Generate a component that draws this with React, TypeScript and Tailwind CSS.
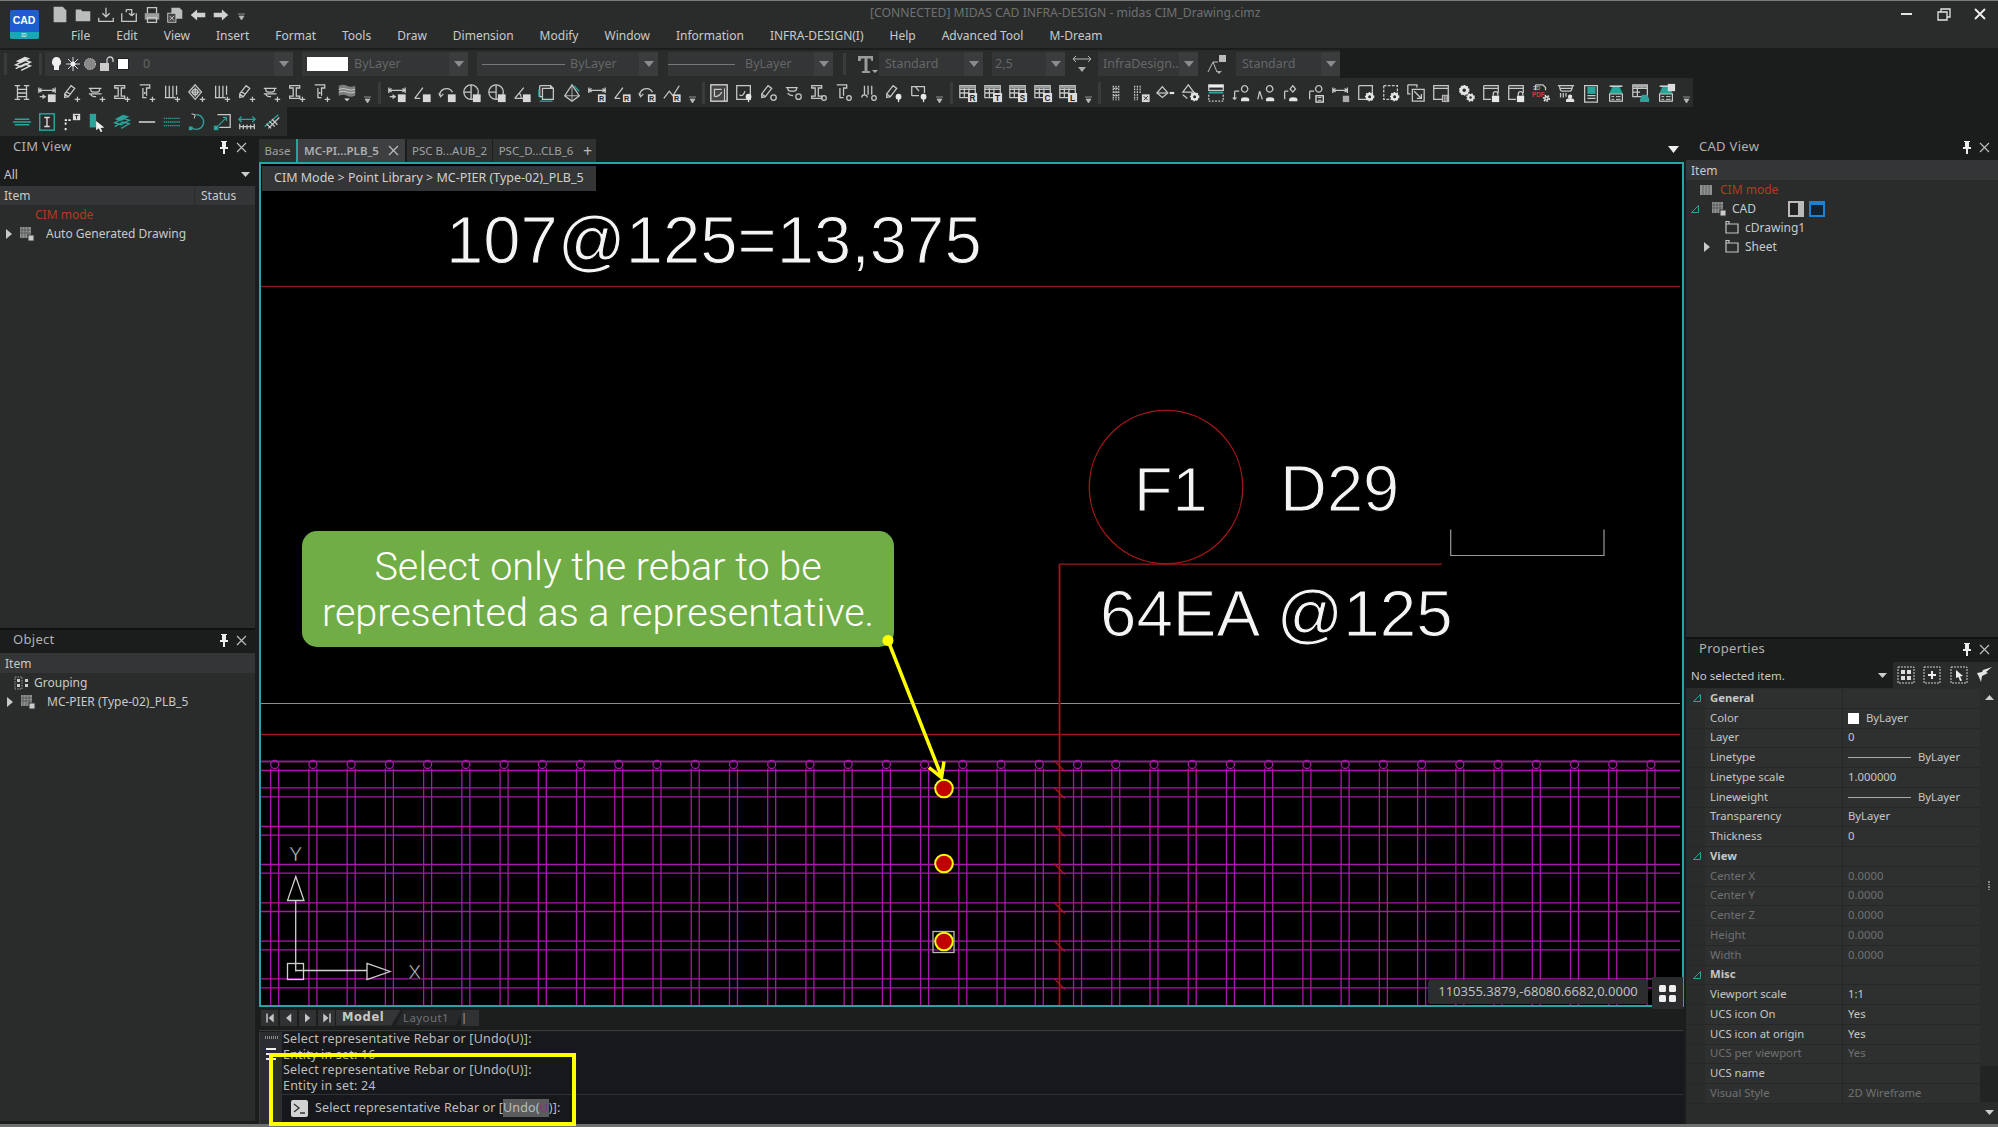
import React from "react";

const S = { stroke: "#c6c8c8", strokeWidth: 1.4, fill: "none" } as const;
const T = "#2aa39a";
const badge = (l?: string) => (
  <g>
    <rect x="12" y="12.5" width="8.5" height="8.5" fill="#d8d8d8" />
    {l ? <text x="16.2" y="20" fontSize="8" fontWeight="700" textAnchor="middle" fill="#222" fontFamily="Liberation Sans, sans-serif">{l}</text> : null}
  </g>
);
const plus = <path d="M17 15v6M14 18h6" {...S} />;
const lens = <g><circle cx="16" cy="15" r="3.2" fill="#e8e8e8" /><path d="M16 17v4" stroke="#e8e8e8" strokeWidth="1.4" /></g>;
const person = <g><path d="M15 3a3.5 3.5 0 1 0 .01 0M4 9h5M4 9v9" {...S} /><path d="M11 20h9v-2a4 2 0 0 0-9 0z" fill="#e4e4e4" /><path d="M4 18l-2-2M4 18l2-2" {...S} /></g>;
const gear = (x: number, y: number, r = 3) => (
  <g>
    <circle cx={x} cy={y} r={r} fill="none" stroke="#e4e4e4" strokeWidth={r * 0.9} />
    <circle cx={x} cy={y} r={r + 1.4} fill="none" stroke="#e4e4e4" strokeWidth="1.6" strokeDasharray="1.6 1.6" />
  </g>
);
const win = <path d="M3 3h16v15H3zM3 6h16" {...S} />;
const lock = <g><rect x="12" y="14" width="8" height="7" fill="#e8e8e8" /><path d="M13.5 14v-2a2.5 2.5 0 0 1 5 0v2" {...S} /></g>;
const table = (l: string) => (
  <g>
    <path d="M2 3h17v13H2zM2 7h17M2 11h10M7 3v13M12 3v13" {...S} />
    <rect x="2" y="3" width="17" height="3" fill="#9a9c9c" />
    <rect x="11" y="11" width="10" height="10" fill="#dcdcdc" />
    <text x="16" y="19.5" fontSize="9" fontWeight="700" textAnchor="middle" fill="#222" fontFamily="Liberation Sans, sans-serif">{l}</text>
  </g>
);
const dome = <g><path d="M4 11l3-7h8l3 7z" fill={T} /><path d="M4 3.5h14" stroke="#ddd" strokeWidth="1.6" /><rect x="4" y="12" width="14" height="8" fill="none" stroke="#ddd" strokeWidth="1.2" /><path d="M6 15h3M6 18h3M11 15h5M11 18h5" stroke="#ddd" /></g>;

const ICONS: Record<string, React.ReactNode> = {
  page: <path d="M4 2h10l4 4v13H4z" fill="#bbbdbd" />,
  folder: <path d="M3 5h6l1 2h9v11H3z" fill="#bbbdbd" />,
  dl: <path d="M3 14v4h16v-4M11 3v10M7 9l4 4 4-4" {...S} />,
  ul: <path d="M3 9v9h16V9M8 5h6v7M14 12l-3-3M14 12l3-3M8 5v3" {...S} />,
  print: <g><path d="M3 9h16v7H3z" fill="#9b9d9d" /><path d="M6 9V3h10v6M6 14h10v5H6z" {...S} /></g>,
  saveall: <g><path d="M7 3h9l3 3v9H7z" fill="#bbbdbd" /><rect x="3" y="9" width="9" height="10" fill="#444" stroke="#ccc" /><path d="M5 12l5 5M10 12l-5 5" stroke="#ddd" /></g>,
  back: <path d="M3 11l7-6v3.5h9v5h-9V17z" fill="#d0d2d2" />,
  fwd: <path d="M19 11l-7-6v3.5H3v5h9V17z" fill="#d0d2d2" />,
  gridh: <path d="M3 3h6M6 3v15M3 18h6M13 3h6M16 3v15M13 18h6M6 7h10M6 11h10M6 15h10" {...S} />,
  dimi: <g><path d="M2 8h18M2 5v6M20 5v6M5 6l-3 2 3 2M17 6l3 2-3 2" {...S} />{badge()}<path d="M3 15h6M6 13l3 2-3 2" {...S} /></g>,
  pencil: <g><path d="M3 12l7-9 4 3-7 9zM5 9.500l4 3M3 12l0 4 4-1" {...S} />{plus}</g>,
  bowl: <g><path d="M2 6h14M4 6q0 4 3 4h4q3 0 3-4M2 12h14M4 12q1 3 4 3h2" {...S} />{plus}</g>,
  ibeam: <g><path d="M3 3h11v2.500h-3.800v9H14V17H3v-2.500h3.800v-9H3z" {...S} />{plus}</g>,
  tbeam: <g><path d="M3 2h11v3.500h-3.500V14M6.500 5.500V16h4" {...S} /><circle cx="8.500" cy="11" r="1" fill="#ccc" />{plus}</g>,
  comb: <g><path d="M4 3v13M8 3v13M12 3v13M16 3v10M3 16h12" {...S} />{plus}</g>,
  target: <g><path d="M9 2l7 8-7 8-7-8z" {...S} /><circle cx="9" cy="10" r="3" {...S} /><path d="M9 5v10M4 10h10" {...S} />{plus}</g>,
  wave: <g><path d="M2 3q5-2 9 0t9 0v11q-5 2-9 0t-9 0z" fill="#7c7e7e" /><path d="M2 7q5-2 9 0t9 0M2 10q5-2 9 0t9 0" stroke="#d0d0d0" fill="none" /><path d="M8 17h6l-3 3z" fill="#ddd" /></g>,
  anglei: <g><path d="M3 17L12 5M3 17h6" {...S} />{badge()}</g>,
  arci: <g><path d="M3 14a7.500 7.500 0 0 1 14-4" {...S} /><path d="M2 11l2 4 3-3" {...S} />{badge()}</g>,
  circi: <g><circle cx="10" cy="10" r="8" {...S} /><path d="M10 2v16M2 10h8" {...S} />{badge()}</g>,
  tri: <g><path d="M3 17L13 5M3 17h13M10 17a7 7 0 0 0-2-6" {...S} />{badge()}</g>,
  cube: <g><path d="M6 6h12v12H6zM3 3h12v3M3 3v12h3M15 3l3 3" {...S} /><path d="M3 20h14" stroke={T} strokeWidth="1.4" /><path d="M2 7v8" stroke={T} strokeWidth="1.4" /></g>,
  dia: <g><path d="M11 2L3 14l8 6 8-6z" {...S} /><path d="M11 2v18M3 14h16" {...S} strokeWidth={0.9} /><path d="M13 3l6 6" stroke={T} strokeWidth="1.4" /></g>,
  dimr: <g><path d="M2 8h18M2 5v6M20 5v6" {...S} /><path d="M5 6l-3 2 3 2M17 6l3 2-3 2" {...S} />{badge("R")}</g>,
  angler: <g><path d="M3 17L12 5M3 17h6" {...S} />{badge("R")}</g>,
  arcr: <g><path d="M3 14a7.500 7.500 0 0 1 14-4" {...S} /><path d="M2 11l2 4 3-3" {...S} />{badge("R")}</g>,
  polyr: <g><path d="M2 17l6-8 4 5 7-11" {...S} />{badge("R")}</g>,
  fr1: <g><rect x="2" y="2" width="18" height="18" fill="#444" stroke="#ddd" strokeWidth="1.4" /><path d="M6 15V7h8M6 15q6 0 8-5" {...S} /><path d="M17 6v14" stroke="#ddd" /></g>,
  fr2: <g><path d="M3 3h15v15H3z" {...S} /><path d="M6 13q4 3 6-4" {...S} />{lens}</g>,
  pencilo: <g><path d="M3 12l7-9 4 3-7 9zM3 12l0 4 4-1" {...S} /><circle cx="16" cy="16" r="3" {...S} /></g>,
  bowlo: <g><path d="M2 5h13M4 5q0 4 3 4h4q3 0 3-4M4 11q2 3 6 3" {...S} /><circle cx="16" cy="15" r="3" {...S} /></g>,
  ibeamo: <g><path d="M3 3h11v2.500h-3.800v9H14V17H3v-2.500h3.800v-9H3z" {...S} /><circle cx="16.500" cy="16.500" r="2.500" {...S} /></g>,
  tbeamo: <g><path d="M3 2h11v3.500h-3.500V14M6.500 5.500V16h4" {...S} /><circle cx="16.500" cy="16.500" r="2.500" {...S} /></g>,
  combo: <g><path d="M6 3v10M10 3v10M14 3v10" {...S} /><path d="M3 16a3 3 0 0 1 6 0" {...S} /><circle cx="16.500" cy="16.500" r="2.500" {...S} /></g>,
  penlens: <g><path d="M3 12l7-9 4 3-7 9zM3 12l0 4 4-1" {...S} />{lens}</g>,
  gauge: <g><path d="M3 14V4h14v7M3 14h8" {...S} /><path d="M7 4l4 5" {...S} />{lens}</g>,
  tR: table("R"), tT: table("T"), tS: table("S"), tC: table("C"), tL: table("L"),
  dots: <path d="M8 3v16M11 3v16M14 3v16M8 6h6M8 10h6M8 14h6" {...S} strokeDasharray="2 1" />,
  dotsx: <g><path d="M4 3v16M7 3v16M10 3v9" {...S} strokeDasharray="2 1" /><rect x="12" y="12.500" width="8.500" height="8.500" fill="#d8d8d8" /><path d="M14 14.500l4.500 4.500M18.500 14.500L14 19" stroke="#222" /></g>,
  eye: <g><path d="M1 11l6-7 6 7-6 5z" {...S} /><path d="M1 11h12" {...S} /><path d="M15 11h5" stroke="#e4e4e4" strokeWidth="2.400" /></g>,
  diagear: <g><path d="M8 2L2 10h12z" {...S} /><path d="M2 13l5 4" {...S} />{gear(15, 15)}</g>,
  winteal: <g><path d="M3 2h16v6H3z" {...S} /><rect x="3" y="2" width="16" height="3" fill="#eee" /><path d="M3 10.500h16" stroke={T} strokeWidth="2.200" /><path d="M3 13v7h16v-7" {...S} strokeDasharray="2 1.500" /></g>,
  per1: person,
  per2: <g><path d="M15 3a3.500 3.500 0 1 0 .01 0M4 9l-2 9M4 9l3 9" {...S} /><path d="M11 20h9v-2a4 2 0 0 0-9 0z" fill="#e4e4e4" /></g>,
  per3: <g><path d="M13 3l3 3.500-3 3.500-3-3.500zM4 9h4M4 9v9" {...S} /><path d="M9 20h9v-2a4 2 0 0 0-9 0z" fill="#e4e4e4" /></g>,
  per4: <g><path d="M14 3a3.500 3.500 0 1 0 .01 0M4 9h5M4 9v9" {...S} /><rect x="11" y="14" width="8" height="7" fill="none" stroke="#e4e4e4" strokeWidth="1.400" /><path d="M13 16h4M13 19h4" stroke="#e4e4e4" /></g>,
  diml: <g><path d="M2 8h16M2 5v6M18 5v6M5 6l-3 2 3 2M15 6l3 2-3 2" {...S} /><rect x="13" y="14" width="7" height="7" fill="#aaa" /></g>,
  frgear: <g><path d="M3 3h15v8M3 3v15h8" {...S} />{gear(15, 15)}</g>,
  frgear2: <g><path d="M3 3h15v8M3 3v15h8" {...S} strokeDasharray="3 1.500" />{gear(15, 15)}</g>,
  frarrow: <g><path d="M7 7h13v13H7zM2 2h10v3M2 2v10h3" {...S} /><path d="M9 9l8 8M17 12v5h-5" {...S} /></g>,
  wingrid: <g>{win}<rect x="12" y="13" width="8" height="8" fill="#bbb" /><path d="M14 14v6M16.500 14v6" stroke="#333" /></g>,
  gears: <g>{gear(9, 8, 3.600)}{gear(16, 16, 2.600)}</g>,
  winlock: <g><path d="M3 3h16v8M3 3v15h8M3 6h16" {...S} />{lock}</g>,
  pdf: <g><path d="M5 2h8l3 3v3M5 8V2" {...S} /><text x="2" y="8" fontSize="6.500" fill="#ccc" fontFamily="Liberation Sans, sans-serif">3D</text><text x="1" y="15.500" fontSize="7" fontWeight="700" fill="#d04040" fontFamily="Liberation Sans, sans-serif">PDF</text>{gear(17, 17, 1.800)}</g>,
  bowlp: <g><path d="M2 3h18M4 3q0 6 3 6h8q3 0 3-6M5 6h12" {...S} /><path d="M5 11v5M8 11v5M11 11v4" {...S} /><path d="M11 21h9v-2a4 2 0 0 0-9 0z" fill="#e4e4e4" /><circle cx="15.500" cy="15" r="2.400" fill="#e4e4e4" /></g>,
  book3d: <g><path d="M4 3h14v18H4z" {...S} /><rect x="7" y="4" width="9" height="8" fill={T} /><path d="M7 14h9M7 17h9" {...S} /></g>,
  dome,
  tdome: <g><path d="M2 2h16v13H2zM2 6h16M2 10h8M7 2v13M12 2v4" {...S} /><rect x="2" y="2" width="16" height="3" fill="#aaa" /><path d="M10 21v-3l2-5h6l2 5v3z" fill={T} /></g>,
  domel: <g>{dome}<rect x="13" y="1" width="8" height="8" fill="#ddd" /></g>,
  eq: <path d="M3 8h16M3 14h16M1 11h20" stroke={T} strokeWidth="1.500" fill="none" />,
  ibox: <g><rect x="3" y="2" width="16" height="18" fill="none" stroke={T} strokeWidth="1.600" /><path d="M8 6h6M11 6v10M8 16h6" stroke="#ddd" strokeWidth="1.500" /></g>,
  flag: <g><path d="M4 20v-3M4 14V9h6" stroke="#eee" strokeWidth="2" fill="none" strokeDasharray="2.500 1.500" /><rect x="12" y="2" width="8" height="7" fill="#ddd" /><path d="M14 4h4M16 4v4" stroke="#222" /></g>,
  cursor: <g><path d="M3 2h7v15H3z" fill={T} /><path d="M10 10l9 7-4 .500 2 4-2 .500-2-4-3 2z" fill="#f0f0f0" /></g>,
  layt: <g><path d="M3 8l9-5 7 2-9 5z" fill={T} /><path d="M3 12l9-5 7 2-9 5zM3 16l9-5 7 2-9 5" fill="none" stroke={T} strokeWidth="1.500" /></g>,
  line: <path d="M2 11h18" stroke="#ddd" strokeWidth="1.600" />,
  dashes: <path d="M2 7h18M2 11h18M2 15h18" stroke={T} strokeWidth="1.400" strokeDasharray="1.500 .8" />,
  rot: <g><path d="M10 3a8 8 0 1 1-5 14" {...S} stroke={T} /><path d="M5 2l4 1-1 4" stroke="#ddd" fill="none" /><rect x="2" y="16" width="4" height="4" fill={T} /></g>,
  scale: <g><rect x="2" y="15" width="5" height="5" fill={T} /><path d="M6 3h14v14H8" {...S} /><path d="M7 15L16 6M16 6h-4M16 6v4" stroke={T} strokeWidth="1.300" fill="none" /></g>,
  dims: <g><path d="M2 8h18M5 5l-3 3 3 3M17 5l3 3-3 3" stroke={T} strokeWidth="1.400" fill="none" /><path d="M3 13v6M7 14v5M11 14v5M15 14v5M19 13v6M3 16h16" {...S} /></g>,
  diag: <g><path d="M3 16L18 3" stroke={T} strokeWidth="1.500" /><path d="M7 18l12-12M8 10l6 6M11 8l6 6M5 13l5 5" {...S} /></g>,
};

const Ico = ({ n, s = 20 }: { n: string; s?: number }) => (
  <svg viewBox="0 0 22 22" width={s} height={s} className="shrink-0">{ICONS[n]}</svg>
);
const Drop = () => (
  <div className="w-[15px] h-full flex items-end justify-center pb-[3px] shrink-0">
    <svg width="7" height="8" viewBox="0 0 7 8"><path d="M0 1h7M1 3h5l-2.500 4z" stroke="#b8b8b8" fill="#b8b8b8" strokeWidth=".7" /></svg>
  </div>
);
const Sep = ({ w }: { w: number }) => (
  <div className="h-full flex items-center justify-center shrink-0" style={{ width: w }}>
    <div className="w-[3px] h-[22px] bg-[#3a3c3c]" />
  </div>
);
const Row = ({ items }: { items: (string | number)[] }) => (
  <>
    {items.map((n, i) =>
      typeof n === "number" ? <Sep key={i} w={n} /> : n === "drop" ? <Drop key={i} /> : (
        <div key={i} className="w-[25px] h-full flex items-center justify-center shrink-0"><Ico n={n} /></div>
      )
    )}
  </>
);

const Arrow = ({ cls = "" }: { cls?: string }) => (
  <svg width="10" height="6" viewBox="0 0 10 6" className={cls}><path d="M0 0h10L5 6z" fill="#8a8c8c" /></svg>
);
const Combo = ({ w, children, ml = 0 }: { w: number; children?: React.ReactNode; ml?: number }) => (
  <div className="h-[24px] bg-[#333536] flex items-center relative shrink-0 text-[#656767] text-[12.500px]" style={{ width: w, marginLeft: ml }}>
    {children}
    <div className="absolute right-0 top-0 bottom-0 w-[19px] flex items-center justify-center bg-[#3a3c3d]"><Arrow /></div>
  </div>
);
const Pin = () => (
  <svg width="10" height="13" viewBox="0 0 10 13"><path d="M2 0h6v1H7v5h2v2H6v5H4V8H1V6h2V1H2z" fill="#ededed" /></svg>
);
const Close = () => (
  <svg width="11" height="11" viewBox="0 0 11 11"><path d="M1 1l9 9M10 1l-9 9" stroke="#bcbcbc" strokeWidth="1.200" /></svg>
);
const PanelTitle = ({ t, h = 26 }: { t: string; h?: number }) => (
  <div className="flex items-center pl-[13px] pr-[8px] bg-[#1b1c1c] text-[#b0b2b2] text-[13px] tracking-[.3px] shrink-0" style={{ height: h, paddingBottom: h > 24 ? 6 : 3 }}>
    <span className="flex-1">{t}</span>
    <div className="flex items-center gap-[7px]"><Pin /><Close /></div>
  </div>
);
const TriR = () => <svg width="6" height="10" viewBox="0 0 6 10"><path d="M0 0l6 5-6 5z" fill="#c8c8c8" /></svg>;
const TriE = () => <svg width="8" height="8" viewBox="0 0 8 8"><path d="M7.500.500v7H.5z" fill="none" stroke={T} /></svg>;
const TreeIcon = () => (
  <svg width="16" height="16" viewBox="0 0 16 16"><rect x="1" y="1" width="11" height="11" fill="#8f9191" /><path d="M3 1v11M6 1v11M9 1v11M1 4h11M1 7h11" stroke="#4a4c4c" strokeWidth=".7" /><rect x="9" y="9" width="6" height="6" fill="#ccc" stroke="#333" /></svg>
);
const Folder = () => (
  <svg width="14" height="13" viewBox="0 0 14 13"><path d="M1 3h12v9H1zM1 3V0M4 3V0M1 .500h3" fill="none" stroke="#c4c4c4" strokeWidth="1.200" /></svg>
);

const Grid = () => {
  const ys = [771, 788.3, 797.3, 827, 835.7, 865, 873.7, 903.3, 912, 941.7, 950.3, 979.3, 988.3];
  const cols = Array.from({ length: 37 }, (_, i) => 274.7 + i * 38.23);
  const ticks = [766, 793, 831, 869, 908, 946, 984];
  return (
    <svg className="absolute left-0 top-0" width="1419" height="841" viewBox="261 164.500 1419 841">
      <path d="M261 287h1419" stroke="#8f1616" strokeWidth="1.300" />
      <path d="M261 704h1419" stroke="#8c8c8c" strokeWidth="1.200" />
      <path d="M261 735h1419" stroke="#a01818" strokeWidth="1.500" />
      <path d="M261 762h1419" stroke="#7a2a7a" strokeWidth="2" />
      {ys.map((y) => <path key={y} d={`M261 ${y}h1419`} stroke="#a818a8" strokeWidth="1.300" />)}
      {cols.map((x) => (
        <g key={x} stroke="#a818a8" strokeWidth="1.300" fill="none">
          <path d={`M${x - 4} 1006V769M${x + 4} 1006V769`} />
          <circle cx={x} cy="765" r="4" />
        </g>
      ))}
      <path d="M1059.500 565V1006" stroke="#701010" strokeWidth="1.800" />
      {ticks.map((y) => <path key={y} d={`M1054 ${y - 5}l11 11`} stroke="#a81818" strokeWidth="1.300" />)}
      <path d="M1442 564.700H1059.500V1006" stroke="#a01818" strokeWidth="1.300" fill="none" />
      <circle cx="1166" cy="487.500" r="76.700" stroke="#a01818" strokeWidth="1.300" fill="none" />
      <path d="M1450.700 530v26H1604v-26" stroke="#9a9a9a" strokeWidth="1.200" fill="none" />
      <g fontFamily="Liberation Sans, sans-serif" fill="#f4f4f4" stroke="#000" strokeWidth="1.100" paintOrder="fill">
        <text x="446" y="263" fontSize="67">107@125=13,375</text>
        <text x="1134" y="511" fontSize="63">F1</text>
        <text x="1280" y="511" fontSize="65">D29</text>
        <text x="1100" y="636" fontSize="65.500" wordSpacing="2">64EA @125</text>
      </g>
      <g stroke="#d0d0d0" strokeWidth="1.300" fill="none">
        <rect x="287.500" y="964" width="16" height="16" />
        <path d="M295.700 972V901M295.700 971H367M287.500 901h16.500l-8.200-24zM367 964v16l23-8z" />
      </g>
      <g fontFamily="Liberation Sans, sans-serif" fill="#d8d8d8" fontSize="20" stroke="#000" strokeWidth=".6">
        <text x="289" y="861">Y</text>
        <text x="408" y="979">X</text>
      </g>
      {[789, 864, 942].map((y) => <circle key={y} cx="944" cy={y} r="8.800" fill="#c00000" stroke="#ffff00" strokeWidth="2" />)}
      <rect x="933" y="932" width="21" height="21" fill="none" stroke="#b8b8b8" strokeWidth="1.300" />
    </svg>
  );
};

const props: { t: string; l?: string; v?: React.ReactNode; d?: boolean; s?: boolean }[] = [
  { t: "s", l: "General", s: true },
  { t: "r", l: "Color", v: <span className="flex items-center gap-[7px]"><span className="w-[11px] h-[11px] bg-white" />ByLayer</span> },
  { t: "r", l: "Layer", v: "0" },
  { t: "r", l: "Linetype", v: <span className="flex items-center gap-[7px]"><span className="w-[63px] h-px bg-[#aaa]" />ByLayer</span> },
  { t: "r", l: "Linetype scale", v: "1.000000" },
  { t: "r", l: "Lineweight", v: <span className="flex items-center gap-[7px]"><span className="w-[63px] h-px bg-[#aaa]" />ByLayer</span> },
  { t: "r", l: "Transparency", v: "ByLayer" },
  { t: "r", l: "Thickness", v: "0" },
  { t: "s", l: "View", s: true },
  { t: "r", l: "Center X", v: "0.0000", d: true },
  { t: "r", l: "Center Y", v: "0.0000", d: true },
  { t: "r", l: "Center Z", v: "0.0000", d: true },
  { t: "r", l: "Height", v: "0.0000", d: true },
  { t: "r", l: "Width", v: "0.0000", d: true },
  { t: "s", l: "Misc", s: true },
  { t: "r", l: "Viewport scale", v: "1:1" },
  { t: "r", l: "UCS icon On", v: "Yes" },
  { t: "r", l: "UCS icon at origin", v: "Yes" },
  { t: "r", l: "UCS per viewport", v: "Yes", d: true },
  { t: "r", l: "UCS name", v: "" },
  { t: "r", l: "Visual Style", v: "2D Wireframe", d: true },
];

const row2 = [
  "gridh", "dimi", "pencil", "bowl", "ibeam", "tbeam", "comb", "target", "comb", "pencil", "bowl", "ibeam", "tbeam", "wave", "drop", 10,
  "dimi", "anglei", "arci", "circi", "circi", "tri", "cube", "dia", "dimr", "angler", "arcr", "polyr", "drop", 7,
  "fr1", "fr2", "pencilo", "bowlo", "ibeamo", "tbeamo", "combo", "penlens", "gauge", "drop", 9,
  "tR", "tT", "tS", "tC", "tL", "drop", 8,
  "dots", "dotsx", "eye", "diagear", "winteal", "per1", "per2", "per3", "per4", "diml", "frgear", "frgear2", "frarrow", "wingrid", "gears", "winlock", "winlock", "pdf", "bowlp", "book3d", "dome", "tdome", "domel", "drop",
];
const row3 = ["eq", "ibox", "flag", "cursor", "layt", "line", "dashes", "rot", "scale", "dims", "diag"];
const menus = ["File", "Edit", "View", "Insert", "Format", "Tools", "Draw", "Dimension", "Modify", "Window", "Information", "INFRA-DESIGN(I)", "Help", "Advanced Tool", "M-Dream"];

export default function App() {
  return (
    <div className="w-[1998px] h-[1127px] bg-[#1b1c1c] flex flex-col overflow-hidden font-['Noto_Sans',sans-serif] text-[12px] text-[#c8caca] relative border-t border-[#7a7a7a]">
      {/* title + menu */}
      <div className="h-[47px] bg-[#2a2c2c] flex shrink-0">
        <div className="w-[48px] flex justify-center pt-[9px]">
          <div className="w-[29px] h-[29px] rounded-[2px] bg-[#1d5fd0] flex flex-col overflow-hidden">
            <div className="flex-1 flex items-center justify-center text-white font-bold text-[10.500px] font-['Liberation_Sans',sans-serif]">CAD</div>
            <div className="h-[7px] bg-[#19a7b5] text-white text-[5px] leading-[7px] text-center">ID</div>
          </div>
        </div>
        <div className="flex-1 flex flex-col">
          <div className="h-[23px] flex items-center relative">
            <div className="flex items-center gap-[3px] pl-[2px] pt-[5px] h-full">
              {["page", "folder", "dl", "ul", "print", "saveall", "back", "fwd"].map((n) => <Ico key={n} n={n} />)}
              <Drop />
            </div>
            <div className="absolute left-[822px] top-[3px] text-[#6f7171] text-[12.200px] whitespace-nowrap">[CONNECTED] MIDAS CAD INFRA-DESIGN - midas CIM_Drawing.cimz</div>
            <div className="absolute right-0 top-0 h-[26px] flex items-center">
              <div className="w-[39px] flex justify-center"><div className="w-[11px] h-[2px] bg-[#e4e4e4]" /></div>
              <div className="w-[36px] flex justify-center"><svg width="14" height="13" viewBox="0 0 14 13" fill="none" stroke="#e4e4e4" strokeWidth="1.300"><path d="M1 4h9v8H1zM4 4V1h9v8h-3" /></svg></div>
              <div className="w-[36px] flex justify-center"><svg width="12" height="12" viewBox="0 0 12 12"><path d="M1 1l10 10M11 1L1 11" stroke="#f0f0f0" strokeWidth="1.800" /></svg></div>
            </div>
          </div>
          <div className="h-[24px] flex items-center gap-[26px] pl-[23px] text-[12px] text-[#c8caca] whitespace-nowrap">
            {menus.map((m) => <span key={m}>{m}</span>)}
          </div>
        </div>
      </div>

      {/* toolbars */}
      <div className="h-[89px] flex flex-col shrink-0 pt-[2px]">
        <div className="h-[28px] w-[1340px] bg-[#2a2c2c] flex items-center">
          <div className="w-[10px] flex justify-center shrink-0"><div className="w-[3px] h-[22px] bg-[#3a3c3c]" /></div>
          <div className="w-[25px] flex justify-center shrink-0"><svg width="20" height="20" viewBox="0 0 22 22"><path d="M3 8l10-5 6 2-10 5z" fill="#ddd" /><path d="M3 12l10-5 6 2-10 5zM3 16l10-5 6 2-10 5" fill="none" stroke="#ddd" strokeWidth="1.600" /></svg></div>
          <Sep w={10} />
          <Combo w={248}>
            <div className="flex items-center gap-[3px] pl-[5px] w-[98px]">
              <svg width="13" height="17" viewBox="0 0 13 17"><path d="M6.500 1a5 5 0 0 1 2.500 9v4H4v-4a5 5 0 0 1 2.500-9z" fill="#f0f0f0" /></svg>
              <svg width="14" height="14" viewBox="0 0 14 14"><path d="M7 0v14M0 7h14M2 2l10 10M12 2L2 12" stroke="#d8d8d8" /><circle cx="7" cy="7" r="2.500" fill="#eee" /></svg>
              <svg width="14" height="14" viewBox="0 0 14 14"><circle cx="7" cy="7" r="5.500" fill="#888" stroke="#ccc" strokeDasharray="1.500 1" /></svg>
              <svg width="14" height="16" viewBox="0 0 14 16"><rect x="0" y="7" width="9" height="8" fill="#ccc" /><path d="M7 7V4a3 3 0 0 1 6 0v2" fill="none" stroke="#ccc" strokeWidth="1.300" /></svg>
              <span className="w-[12px] h-[12px] bg-white border border-[#222]" />
            </div>
            <span>0</span>
          </Combo>
          <Combo w={166} ml={9}>
            <span className="w-[41px] h-[14px] bg-white ml-[5px] mr-[6px]" />ByLayer
          </Combo>
          <Combo w={181} ml={9}>
            <span className="w-[83px] h-px bg-[#777] ml-[5px] mr-[5px]" />ByLayer
          </Combo>
          <Combo w={165} ml={10}>
            <span className="w-[67px] h-px bg-[#777] ml-0 mr-[10px]" />ByLayer
          </Combo>
          <Sep w={23} />
          <div className="w-[22px] flex justify-center shrink-0">
            <svg width="21" height="21" viewBox="0 0 21 21"><path d="M1 2h15v5h-1.500l-1-2.500H10.500V17H13v2H5v-2h2.500V4.500H4.500L3.500 7H1z" fill="#9a9c9c" /><path d="M15 16h6l-3 3z" fill="#aaa" /></svg>
          </div>
          <Combo w={104} ml={1}><span className="pl-[6px]">Standard</span></Combo>
          <Combo w={73} ml={9}><span className="pl-[3px]">2,5</span></Combo>
          <div className="w-[33px] flex justify-center shrink-0">
            <svg width="18" height="20" viewBox="0 0 18 20"><path d="M0 5h18M3 2L0 5l3 3M15 2l3 3-3 3" stroke="#b8b8b8" fill="none" /><path d="M5 13h8l-4 5z" fill="#aaa" /></svg>
          </div>
          <Combo w={100}><span className="pl-[5px]">InfraDesign...</span></Combo>
          <div className="w-[38px] flex justify-center shrink-0">
            <svg width="20" height="21" viewBox="0 0 20 21"><path d="M1 18l5-10h5M6 8l4 10" stroke="#bbb" fill="none" /><rect x="12" y="1" width="7" height="7" fill="#bbb" /><path d="M9 17h6l-3 3z" fill="#aaa" /></svg>
          </div>
          <Combo w={104}><span className="pl-[6px]">Standard</span></Combo>
        </div>
        <div className="h-[29px] w-[1693px] bg-[#2a2c2c] flex items-center pl-[9.500px] shrink-0"><Row items={row2} /></div>
        <div className="h-[29px] w-[287px] bg-[#2a2c2c] flex items-center pl-[9.500px] shrink-0"><Row items={row3} /></div>
      </div>

      {/* main */}
      <div className="h-[987px] flex shrink-0">
        {/* left */}
        <div className="w-[255px] mr-[4px] flex flex-col shrink-0 text-[12px]">
          <div className="h-[491px] bg-[#2a2c2c] flex flex-col">
            <PanelTitle t="CIM View" />
            <div className="h-[23px] bg-[#1b1c1c] flex items-center justify-between pl-[4px] pr-[5px]"><span>All</span><svg width="9" height="5" viewBox="0 0 9 5"><path d="M0 0h9L4.500 5z" fill="#ccc" /></svg></div>
            <div className="h-[19px] bg-[#333536] flex items-center">
              <span className="w-[194px] pl-[4px]">Item</span>
              <span className="w-[49px] pl-[6px] border-l border-[#2a2c2c]">Status</span>
            </div>
            <div className="h-[19px] flex items-center pl-[35px] text-[#b53a1d]">CIM mode</div>
            <div className="h-[19px] flex items-center pl-[6px] gap-[7px]"><TriR /><TreeIcon /><span className="ml-[4px]">Auto Generated Drawing</span></div>
          </div>
          <div className="h-[2px] bg-[#111]" />
          <div className="h-[491px] bg-[#2a2c2c] flex flex-col">
            <PanelTitle t="Object" h={23} />
            <div className="h-[20px] bg-[#333536] flex items-center pl-[5px] pt-[1px]">Item</div>
            <div className="h-[19px] flex items-center pl-[14px] gap-[4px]">
              <svg width="16" height="14" viewBox="0 0 16 14"><rect x="1" y="1" width="7" height="12" fill="none" stroke="#999" strokeDasharray="1.500 1" /><rect x="3" y="3" width="3" height="3" fill="#ccc" /><rect x="3" y="8" width="3" height="3" fill="#ccc" /><rect x="11" y="3" width="3" height="3" fill="#ccc" /><rect x="11" y="8" width="3" height="3" fill="#ccc" /></svg>
              <span>Grouping</span>
            </div>
            <div className="h-[19px] flex items-center pl-[7px] gap-[7px]"><TriR /><TreeIcon /><span className="ml-[4px]">MC-PIER (Type-02)_PLB_5</span></div>
          </div>
        </div>

        {/* center */}
        <div className="w-[1424px] mr-[3px] flex flex-col shrink-0 relative">
          <div className="h-[26px] flex items-end text-[11.500px] relative whitespace-nowrap">
            <div className="w-[37px] h-[23px] bg-[#2f3131] flex items-center justify-center text-[#a0a2a2]">Base</div>
            <div className="w-[109px] h-[23px] bg-[#3d3f40] border-l-2 border-[#2aa39a] flex items-center pl-[6px] font-semibold text-[#aeb0b0]">MC-PI...PLB_5<span className="ml-auto mr-[6px]"><Close /></span></div>
            <div className="w-[85px] ml-[2px] h-[23px] bg-[#2f3131] flex items-center justify-center text-[#a0a2a2]">PSC B...AUB_2</div>
            <div className="w-[86px] ml-px h-[23px] bg-[#2f3131] flex items-center justify-center text-[#a0a2a2]">PSC_D...CLB_6</div>
            <div className="w-[17px] h-[23px] bg-[#2f3131] flex items-center justify-center text-[#bbb] text-[16px]">+</div>
            <svg className="absolute right-[4px] top-[9px]" width="11" height="7" viewBox="0 0 11 7"><path d="M0 0h11L5.500 7z" fill="#eee" /></svg>
          </div>
          <div className="h-[845px] border-2 border-[#2aa3a8] bg-black relative overflow-hidden shrink-0 -mr-px">
            <Grid />
            <div className="absolute left-[1px] top-[2px] w-[334px] h-[25px] bg-[#333536] flex items-center pl-[12px] text-[#d0d0d0] text-[12.500px] whitespace-nowrap">CIM Mode &gt; Point Library &gt; MC-PIER (Type-02)_PLB_5</div>
            <div className="absolute left-[41px] top-[367px] w-[592px] h-[116px] rounded-[15px] bg-[#70ad47] flex flex-col items-center justify-center text-white text-[39.500px] leading-[45.500px] font-light font-['Roboto',sans-serif] pt-[1px] whitespace-nowrap">
              <span>Select only the rebar to be</span>
              <span>represented as a representative.</span>
            </div>
            <svg className="absolute left-0 top-0" width="1419" height="841" viewBox="261 164.500 1419 841" fill="none">
              <path d="M888 641L942 778M929 768l12.500 10 2.500-16" stroke="#ffff00" strokeWidth="3.500" />
              <circle cx="888" cy="641" r="5.500" fill="#ffff00" />
            </svg>
            <div className="absolute left-[1167px] top-[816px] w-[220px] h-[24px] rounded-[2px] bg-[#2b2d2f] flex items-center justify-center text-[#c4c6c6] text-[13px] font-['Open_Sans',sans-serif]">110355.3879,-68080.6682,0.0000</div>
          </div>
          <div className="absolute left-[1393px] top-[840px] w-[31px] h-[32px] bg-[#2a2c2e] grid grid-cols-2 gap-[3px] p-[7px] content-center">
            <span className="w-[7px] h-[7px] bg-[#eee] rounded-[1.500px]" /><span className="w-[7px] h-[7px] bg-[#eee] rounded-[1.500px]" />
            <span className="w-[7px] h-[7px] bg-[#eee] rounded-[1.500px]" /><span className="w-[7px] h-[7px] bg-[#eee] rounded-[1.500px]" />
          </div>
          <div className="h-[24px] bg-[#1c1e1e] border-b border-[#3a3c3c] flex items-center pl-[2px] pb-[2px] shrink-0">
            {["M3 0h2v12H3zM13 0L6 6l7 6z", "M11 0L4 6l7 6z", "M4 0l7 6-7 6z", "M3 0l7 6-7 6zM11 0h2v12h-2z"].map((d, i) => (
              <div key={i} className="w-[17px] h-[16px] mr-[2px] bg-[#2f3133] flex items-center justify-center"><svg width="12" height="10" viewBox="0 0 16 12"><path d={d} fill="#c4c4c4" /></svg></div>
            ))}
            <div className="w-[65px] h-[16px] -ml-[1px] bg-[#333536] flex items-center pl-[6px] font-bold text-[#c8c8c8] text-[11.500px] tracking-[.6px] font-['DejaVu_Sans',sans-serif] [clip-path:polygon(0_0,100%_0,85%_100%,0_100%)]">Model</div>
            <div className="w-[68px] h-[16px] -ml-[6px] bg-[#26282a] flex items-center pl-[8px] text-[#6f7171] text-[11.500px] tracking-[.4px] [clip-path:polygon(12%_0,100%_0,90%_100%,0_100%)]">Layout1</div>
            <div className="w-[18px] h-[16px] -ml-[2px] bg-[#2f3133] flex items-center text-[#aaa] text-[11px]">|</div>
          </div>
          <div className="h-[92px] flex shrink-0 mt-[1px]">
            <div className="w-[23px] bg-[#2b2d31] flex flex-col items-center pt-[4px] border-l border-[#3a3c3c] shrink-0">
              <div className="w-[13px] h-[3px] bg-[repeating-linear-gradient(90deg,#888_0,#888_1px,transparent_1px,transparent_2px)]" />
              <div className="mt-[9px] flex flex-col gap-[3px]"><span className="block w-[10px] h-[2px] bg-[#eee]" /><span className="block w-[10px] h-[2px] bg-[#eee]" /><span className="block w-[10px] h-[2px] bg-[#eee]" /></div>
            </div>
            <div className="flex-1 bg-[#17181b] flex flex-col text-[12.500px] text-[#bdbfbf] whitespace-nowrap tracking-[.2px]">
              <div className="h-[64px] pl-[1px] -mt-[1px] leading-[15.600px] border-b border-[#2f3133]">
                <div>Select representative Rebar or [Undo(U)]:</div>
                <div>Entity in set: 16</div>
                <div>Select representative Rebar or [Undo(U)]:</div>
                <div>Entity in set: 24</div>
              </div>
              <div className="flex-1 flex items-center pl-[9px] gap-[7px] pb-[3px]">
                <div className="w-[17px] h-[17px] bg-[#d2d2d2] rounded-[2px] flex items-center justify-center"><svg width="13" height="11" viewBox="0 0 13 11"><path d="M1 1l5 4-5 4M7 10h5" stroke="#333" strokeWidth="1.300" fill="none" /></svg></div>
                <span className="flex items-center tracking-[.12px]">Select representative Rebar or [<span className="bg-[#5a5c5e]">Undo(</span><span className="bg-[#5a5c5e] text-[#9a2f78]">U</span>)]:</span>
              </div>
            </div>
          </div>
          <div className="absolute left-[10px] top-[916px] w-[307px] h-[73px] border-[4px] border-[#ffff00] z-10" />
        </div>

        {/* right */}
        <div className="w-[312px] flex flex-col shrink-0">
          <div className="h-[500px] bg-[#2a2c2c] flex flex-col">
            <PanelTitle t="CAD View" h={23} />
            <div className="h-[20px] bg-[#333536] flex items-center pl-[5px] pt-[1px]">Item</div>
            <div className="h-[19px] flex items-center pl-[14px] gap-[8px] text-[#b53a1d]"><svg width="12" height="12" viewBox="0 0 12 12"><rect x="0" y="1" width="12" height="10" fill="#8f9191" /><path d="M3 1v10M6 1v10M9 1v10" stroke="#4a4c4c" strokeWidth=".7" /></svg>CIM mode</div>
            <div className="h-[19px] flex items-center pl-[5px]"><TriE /><span className="ml-[12px] mr-[5px]"><TreeIcon /></span><span className="w-[56px]">CAD</span>
              <span className="w-[16px] h-[16px] border-2 border-[#bbb] bg-[#222] mr-[5px] flex justify-end"><span className="w-[4px] h-full bg-[#bbb]" /></span>
              <span className="w-[16px] h-[16px] border-2 border-[#1e82d2] border-t-[4px] bg-[#123]" />
            </div>
            <div className="h-[19px] flex items-center pl-[39px] gap-[6px]"><Folder />cDrawing1</div>
            <div className="h-[19px] flex items-center pl-[18px] gap-[6px]"><span className="mr-[9px]"><TriR /></span><Folder />Sheet</div>
          </div>
          <div className="h-[2px] bg-[#111]" />
          <div className="flex-1 bg-[#2a2c2c] flex flex-col">
            <PanelTitle t="Properties" h={23} />
            <div className="h-[26px] flex items-stretch shrink-0">
              <div className="w-[207px] bg-[#1b1c1c] flex items-center justify-between pl-[5px] pr-[6px] pt-[1px] text-[11.500px]"><span>No selected item.</span><svg width="9" height="5" viewBox="0 0 9 5"><path d="M0 0h9L4.500 5z" fill="#ccc" /></svg></div>
              <div className="flex-1 flex items-center justify-around">
                {["grid", "plus", "cur", "bolt"].map((k) => (
                  <svg key={k} width="18" height="18" viewBox="0 0 18 18" fill="none">
                    {k !== "bolt" ? <rect x="1" y="1" width="16" height="16" stroke="#ccc" strokeDasharray="2 1" /> : null}
                    {k === "grid" ? <path d="M4 4h4v4H4zM10 4h4v4h-4zM4 10h4v4H4zM10 10h4v4h-4z" fill="#ddd" /> : null}
                    {k === "plus" ? <path d="M9 5v8M5 9h8" stroke="#eee" strokeWidth="2" /> : null}
                    {k === "cur" ? <path d="M6 4l7 6-3 .500 2 4-2 .500-1.500-4L6 12z" fill="#eee" /> : null}
                    {k === "bolt" ? <path d="M1 7l5-1 1-2 9-3-6 5 2 1-6 3-1 6-2-5z" fill="#e4e4e4" /> : null}
                  </svg>
                ))}
              </div>
            </div>
            <div className="flex flex-1 relative text-[11.300px]">
              <div className="w-[294px] flex flex-col pt-[1px]">
                {props.map((p) => (
                  <div key={p.l} className={`h-[19.750px] flex items-center shrink-0 border-b border-[#262828] ${p.d ? "text-[#6f7171]" : "text-[#c4c6c6]"}`}>
                    <div className="w-[19px] flex justify-center pl-[3px]">{p.s ? <TriE /> : null}</div>
                    <div className={`w-[137px] pl-[5px] bg-[#2e3030] h-full flex items-center ${p.s ? "font-bold" : ""}`}>{p.l}</div>
                    <div className="flex-1 pl-[5px] border-l border-[#262828] h-full flex items-center bg-[#2e3030]">{p.v}</div>
                  </div>
                ))}
              </div>
              <div className="flex-1 relative">
                <svg className="absolute left-[5px] top-[7px]" width="9" height="5" viewBox="0 0 9 5"><path d="M0 5h9L4.500 0z" fill="#ccc" /></svg>
                <div className="absolute left-[8px] top-[193px] flex flex-col gap-[1px]"><span className="block w-[1.500px] h-[1.500px] bg-[#888]" /><span className="block w-[1.500px] h-[1.500px] bg-[#888]" /><span className="block w-[1.500px] h-[1.500px] bg-[#888]" /><span className="block w-[1.500px] h-[1.500px] bg-[#888]" /></div>
                <div className="absolute left-0 right-0 top-[378px] h-[36px] bg-[#222424]" />
                <svg className="absolute left-[5px] top-[422px]" width="9" height="5" viewBox="0 0 9 5"><path d="M0 0h9L4.500 5z" fill="#ccc" /></svg>
              </div>
            </div>
          </div>
        </div>
      </div>
      <div className="flex-1 bg-[#6e7070]" />
    </div>
  );
}
